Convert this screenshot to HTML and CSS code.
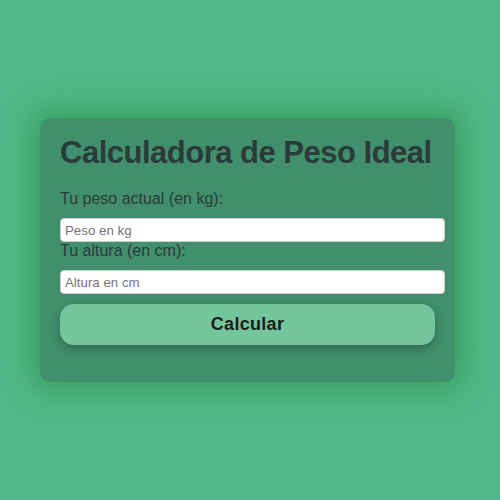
FILE: index.html
```
<!DOCTYPE html>
<html lang="es">
<head>
<meta charset="utf-8">
<title>Calculadora de Peso Ideal</title>
<link rel="stylesheet" href="styles.css">
</head>
<body>
<div class="card">
  <h1 class="title">Calculadora de Peso Ideal</h1>
  <label class="label" for="peso">Tu peso actual (en kg):</label>
  <input class="field" id="peso" type="number" placeholder="Peso en kg">
  <label class="label" for="altura">Tu altura (en cm):</label>
  <input class="field" id="altura" type="number" placeholder="Altura en cm">
  <button class="btn" type="button">Calcular</button>
</div>
</body>
</html>
```
FILE: styles.css
```
html, body {
  margin: 0;
  height: 100%;
}
body {
  background: #52b788;
  font-family: "Liberation Sans", Arial, sans-serif;
  display: flex;
  align-items: center;
  justify-content: center;
  padding-right: 5px;
  box-sizing: border-box;
}
.card {
  width: 375px;
  background: #418f6d;
  border-radius: 10px;
  padding: 20px 20px 37px;
  box-shadow: 0 0 30px 8px #34a05e;
}
.title {
  margin: -3px 0 18px;
  height: 37px;
  line-height: 35px;
  font-size: 31px;
  font-weight: bold;
  letter-spacing: -0.5px;
  white-space: nowrap;
  color: #2b3b3a;
}
.label {
  display: block;
  font-size: 16px;
  color: #2b3b3a;
  margin-bottom: 10px;
  line-height: 18px;
}
.field {
  display: block;
  width: 100%;
  height: 16px;
  padding: 3px 4px;
  margin: 0;
  border: 1px solid #ccc;
  border-radius: 4px;
  background: #fff;
  font-family: "Liberation Sans", Arial, sans-serif;
  font-size: 13.3px;
}
.field::placeholder {
  color: #757575;
}
.btn {
  display: block;
  width: 100%;
  height: 41px;
  margin-top: 10px;
  border: none;
  border-radius: 14px;
  background: #74c69d;
  color: #1c1c1c;
  font-family: "Liberation Sans", Arial, sans-serif;
  font-size: 18px;
  font-weight: bold;
  letter-spacing: 0.3px;
  box-shadow: 0 4px 10px rgba(0, 0, 0, 0.25);
}
```
